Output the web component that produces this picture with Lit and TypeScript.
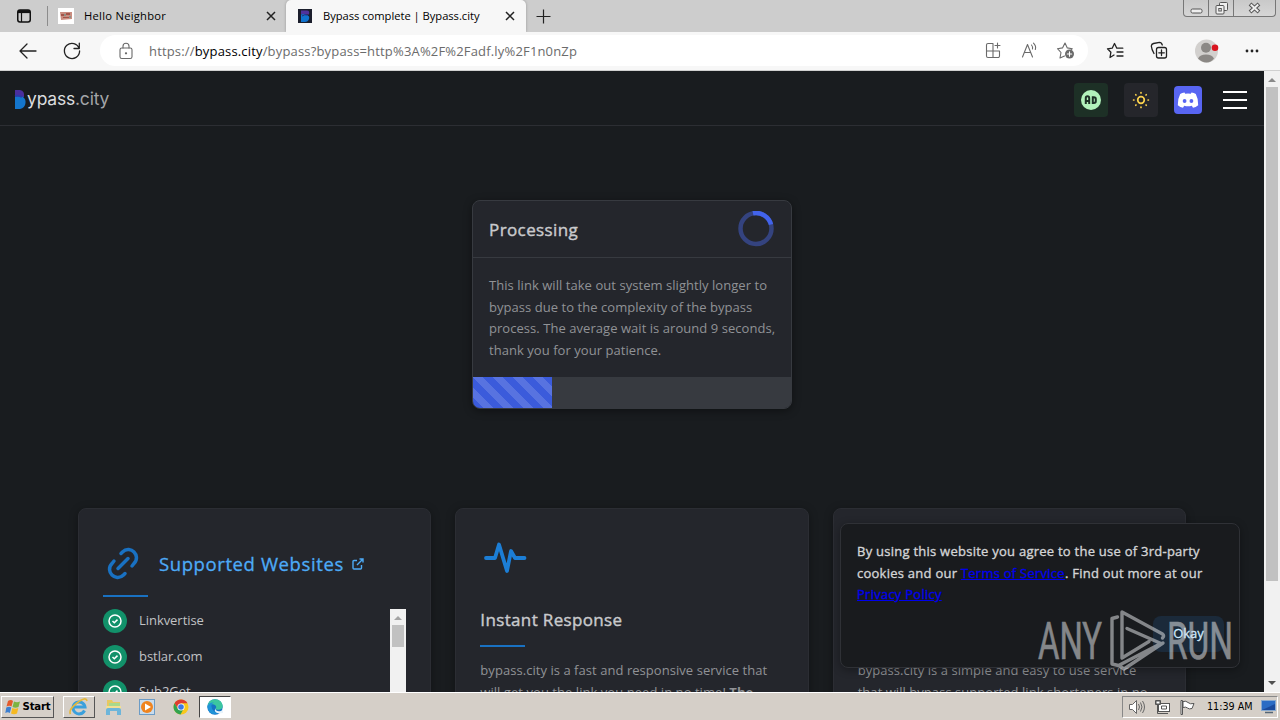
import { LitElement, html, css, svg } from "lit";
import { customElement, property } from "lit/decorators.js";

const uiFont = css`"Open Sans", "Noto Sans", sans-serif`;

@customElement("browser-tabs")
export class BrowserTabs extends LitElement {
  static styles = css`
    :host {
      display: flex;
      height: 32px;
      background: #cdcdcd;
      font: 11.2px/32px ${uiFont};
      color: #000;
    }

    svg {
      display: block;
      flex: none;
    }

    .workspace {
      width: 47px;
      display: flex;
      align-items: center;
      padding-left: 16px;
      box-sizing: border-box;
    }

    .tab {
      display: flex;
      align-items: center;
      box-sizing: border-box;
      height: 32px;
    }

    .idle {
      width: 239px;
      padding: 0 10px 0 10px;
      border-left: 1px solid #8c8c8c;
      border-image: linear-gradient(transparent 20%, #8c8c8c 20% 80%, transparent 80%) 1;
      border-width: 0 0 0 1px;
    }

    .active {
      width: 240px;
      padding: 0 11px 0 12px;
      background: #f7f7f7;
      border-radius: 5px 5px 0 0;
      box-shadow: 0 0 3px #0004;
      clip-path: inset(0 -3px 0 -3px);
    }

    .label {
      flex: 1;
      padding-left: 10px;
      letter-spacing: 0.27px;
      white-space: nowrap;
    }

    .active .label {
      padding-left: 11px;
      letter-spacing: -0.03px;
    }

    .plus {
      align-self: center;
      margin-left: 10px;
    }

    .window {
      display: flex;
      margin-left: auto;
      margin-right: 4px;
      width: 93px;
      height: 17px;
      box-sizing: border-box;
      border: 1px solid #777;
      border-top: 0;
      border-radius: 0 0 4px 4px;
      background: linear-gradient(#c9c9c9, #d6d6d6);
    }

    .window span {
      display: grid;
      place-items: center;
      width: 25px;
      box-sizing: border-box;
      border-right: 1px solid #777;
    }

    .window span:last-child {
      flex: 1;
      border: 0;
    }
  `;

  _close() {
    return svg`<svg width="10" height="10"><path d="M1 1l8 8M9 1l-8 8" stroke="#222" stroke-width="1.5"/></svg>`;
  }

  render() {
    return html`
      <div class="workspace">
        <svg width="16" height="16" fill="none" stroke="#111" stroke-width="1.5">
          <rect x="1.75" y="2" width="12.5" height="12" rx="2.2" />
          <path d="M2 3.6h12" stroke-width="3" />
          <path d="M5.5 4v10" stroke-width="1.2" />
        </svg>
      </div>
      <div class="tab idle">
        <svg width="16" height="16">
          <rect width="16" height="16" fill="#fff" />
          <path d="M2 4h12v7l-11 1z" fill="#c98d80" />
          <path d="M3 6h3v2H3zM8 5h4v2H8zM5 9h6v1H5z" fill="#a35449" />
          <path d="M6 6h2v2H6zM11 8h2v2h-2z" fill="#8b9187" />
        </svg>
        <span class="label">Hello Neighbor</span>
        ${this._close()}
      </div>
      <div class="tab active">
        <svg width="14" height="14">
          <rect width="14" height="14" fill="#1b1e2c" />
          <path d="M3 1.5h6q3 0 2 4H3z" fill="#50329d" />
          <path d="M3 5.5q3-1 6 .5 3 1 2 4-1 3-4 3H3z" fill="#1173cf" />
          <path d="M4 7q3-2 5-1" stroke="#2b2878" fill="none" />
        </svg>
        <span class="label">Bypass complete | Bypass.city</span>
        ${this._close()}
      </div>
      <svg class="plus" width="15" height="15">
        <path d="M7.5.5v14M.5 7.5h14" stroke="#222" stroke-width="1.2" />
      </svg>
      <div class="window">
        <span>
          <svg width="13" height="13"><rect x="1" y="7" width="11" height="4" rx="1.5" fill="#eee" stroke="#555" /></svg>
        </span>
        <span>
          <svg width="13" height="13" fill="#eee" stroke="#555">
            <rect x="4.5" y=".5" width="8" height="8" rx="1" />
            <rect x="1" y="3.5" width="8" height="8.5" rx="1" />
            <rect x="3.8" y="6.5" width="2.5" height="2.5" />
          </svg>
        </span>
        <span>
          <svg width="13" height="12">
            <path d="M2 2l9 8M11 2l-9 8" stroke="#555" stroke-width="4" />
            <path d="M2.7 2.6l7.6 6.8M10.3 2.6l-7.6 6.8" stroke="#eee" stroke-width="2" />
          </svg>
        </span>
      </div>
    `;
  }
}

@customElement("browser-toolbar")
export class BrowserToolbar extends LitElement {
  static styles = css`
    :host {
      display: flex;
      align-items: center;
      box-sizing: border-box;
      height: 39px;
      padding: 0 20px 1px 18px;
      background: #f7f7f7;
      border-bottom: 1px solid #d0d0d0;
      font: 13px/32px ${uiFont};
    }

    svg {
      display: block;
      flex: none;
      fill: none;
      stroke: #222;
      stroke-width: 1.3;
      stroke-linecap: round;
      stroke-linejoin: round;
    }

    .reload {
      margin-left: 24px;
    }

    .address {
      display: flex;
      align-items: center;
      box-sizing: border-box;
      width: 988px;
      height: 31px;
      margin-left: 18px;
      padding: 0 13px 0 16px;
      border-radius: 16px;
      background: #fff;
    }

    .address svg {
      stroke: #6a6a6a;
      stroke-width: 1.1;
    }

    .url {
      flex: 1;
      padding-left: 13px;
      color: #6b6b6b;
      letter-spacing: 0.17px;
      white-space: nowrap;
    }

    .url b {
      font-weight: 400;
      color: #000;
    }

    .tools {
      display: flex;
      gap: 17px;
    }

    .actions {
      display: flex;
      align-items: center;
      flex: 1;
      justify-content: space-between;
      padding-left: 18px;
    }
  `;

  render() {
    return html`
      <svg width="20" height="18"><path d="M18 9H2.5M9 2L2 9l7 7" /></svg>
      <svg class="reload" width="20" height="20">
        <path d="M17.2 7.5A7.6 7.6 0 1 0 17.6 10M17.3 2.2v5.3H12" />
      </svg>
      <div class="address">
        <svg width="20" height="20">
          <rect x="4" y="7" width="12" height="10.5" rx="1.8" />
          <path d="M7 7V5.2a3 3 0 0 1 6 0V7" />
          <circle cx="10" cy="12.3" r=".6" fill="#666" />
        </svg>
        <span class="url">https://<b>bypass.city</b>/bypass?bypass=http%3A%2F%2Fadf.ly%2F1n0nZp</span>
        <div class="tools">
          <svg width="19" height="19">
            <path
              d="M9 2.5H4A1.5 1.5 0 0 0 2.5 4v11A1.5 1.5 0 0 0 4 16.5h10a1.5 1.5 0 0 0 1.5-1.5v-5h-13M9 2.5v14M13.500 2v5M11 4.500h5"
            />
          </svg>
          <svg width="19" height="19">
            <path d="M2.500 16L7.500 3.500 12.500 16M4.200 11.500h6.600M11.500 4q1.500 1.700 1 4M13.500 2.200q3 3 1.800 6.300" />
          </svg>
          <svg width="19" height="19">
            <path d="M8.500 15L4 17l1-5.500L1.500 7.700l5-.8L9 2l2.300 4.900 5 .8-1.600 1.700" />
            <circle cx="13.500" cy="13" r="4.500" fill="#6a6a6a" stroke="none" />
            <path d="M13.500 10.800v4.400M11.300 13h4.400" stroke="#fff" />
          </svg>
        </div>
      </div>
      <div class="actions">
        <svg width="20" height="18">
          <path d="M8 13l-4 2.500.9-5.300L1.500 6.800l4.700-.6L8.500 1.500l2.300 4.700h6M11 10h6M11 14h6" />
        </svg>
        <svg width="20" height="19">
          <rect x="6.500" y="6.500" width="10" height="10.500" rx="2" />
          <path d="M11.500 9v5.500M8.800 11.800h5.500M4 12.500Q1.500 8 1.300 5q.2-2 2.200-2.500l6-1.200q2 0 2.800 2.700" />
        </svg>
        <svg width="25" height="24">
          <g stroke="none">
            <circle cx="11.500" cy="12" r="11.500" fill="#d2d0ce" />
            <circle cx="11" cy="8.800" r="5" fill="#8b8885" />
            <path d="M3 19.500a8.500 6 0 0 1 16 0q-3 4-7.500 4t-8.500-4z" fill="#8b8885" />
            <circle cx="20" cy="8.800" r="3.300" fill="#d9141e" />
          </g>
        </svg>
        <svg width="16" height="6">
          <g fill="#222" stroke="none">
            <circle cx="3" cy="3" r="1.400" />
            <circle cx="8" cy="3" r="1.400" />
            <circle cx="13" cy="3" r="1.400" />
          </g>
        </svg>
      </div>
    `;
  }
}

@customElement("site-header")
export class SiteHeader extends LitElement {
  static styles = css`
    :host {
      display: flex;
      align-items: center;
      box-sizing: border-box;
      height: 55px;
      padding: 0 17px 0 14px;
      border-bottom: 1px solid #2c2e33;
      color: #dcdddf;
      font: 17.5px/54px Inter, sans-serif;
    }

    svg {
      display: block;
    }

    .logo {
      margin-top: 3px;
    }

    .name {
      letter-spacing: -0.2px;
      margin: 1px auto 0 1px;
    }

    .name span {
      color: #a3a5a8;
    }

    .button {
      display: grid;
      place-items: center;
      width: 34px;
      height: 34px;
      margin-top: 4px;
      margin-right: 16px;
      border-radius: 4px;
      background: #25262b;
    }

    .ad {
      background: #1d3026;
    }

    .discord {
      width: 28px;
      height: 28px;
      margin-right: 21px;
      background: #5865f2;
    }

    .menu {
      margin-top: 4px;
    }
  `;

  render() {
    const rays = [0, 45, 90, 135, 180, 225, 270, 315];
    return html`
      <svg class="logo" width="12" height="19">
        <path d="M1 0h5q5 1 4 7l-9 2z" fill="#4a2f9e" />
        <path d="M1 6q5-1.500 8 1 3 2 2.500 6-.5 5-5.500 6H1z" fill="#1475cc" />
        <path d="M1 6q4-1 7 1" stroke="#2c3aa8" stroke-width="2" fill="none" />
      </svg>
      <div class="name">ypass<span>.city</span></div>
      <div class="button ad">
        <svg width="20" height="20">
          <circle cx="10" cy="10" r="10" fill="#b2f2bb" />
          <g fill="none" stroke="#1d3026" stroke-width="2">
            <path
              d="M4.800 14V8q0-1.700 1.700-1.700T8.200 8v6M4.800 11h3.400M11.800 7.200v5.800h1q2 0 2-1.700V8.900q0-1.700-2-1.700z"
            />
          </g>
        </svg>
      </div>
      <div class="button">
        <svg width="18" height="18" fill="none" stroke="#fcd34d" stroke-width="1.700" stroke-linecap="round">
          <circle cx="9" cy="9" r="3.300" />
          ${rays.map((a) => svg`<path d="M9 1.600v.3" transform="rotate(${a} 9 9)"/>`)}
        </svg>
      </div>
      <div class="button discord">
        <svg width="22" height="18" viewBox="0 0 22 18">
          <path
            d="M7.500 1.500Q5 1.800 3.200 3 .5 8 .8 14.200q2.500 2 5.200 2.600l1.200-2q3.800 1 7.600 0l1.200 2q2.700-.6 5.200-2.600Q21.500 8 18.800 3 17 1.800 14.500 1.500l-.7 1.300q-2.800-.4-5.600 0z"
            fill="#fff"
          />
          <ellipse cx="7.600" cy="10" rx="1.900" ry="2.100" fill="#5865f2" />
          <ellipse cx="14.400" cy="10" rx="1.900" ry="2.100" fill="#5865f2" />
        </svg>
      </div>
      <svg class="menu" width="24" height="18">
        <path d="M0 1h24M0 9h24M0 17h24" stroke="#fff" stroke-width="2" />
      </svg>
    `;
  }
}

@customElement("process-card")
export class ProcessCard extends LitElement {
  static styles = css`
    :host {
      display: block;
      box-sizing: border-box;
      width: 320px;
      height: 209px;
      border: 1px solid #373a40;
      border-radius: 8px;
      overflow: hidden;
      background: #24262c;
      box-shadow: 0 2px 8px #0006;
      color: #909296;
      font: 13px/21.7px ${uiFont};
    }

    header {
      display: flex;
      align-items: center;
      justify-content: space-between;
      box-sizing: border-box;
      height: 57px;
      padding: 0 17px 0 16px;
      border-bottom: 1px solid #373a40;
      color: #c9cacd;
      font-size: 17px;
      letter-spacing: 0.4px;
      -webkit-text-stroke: 0.4px #c9cacd;
    }

    header span {
      padding-top: 2px;
    }

    p {
      box-sizing: border-box;
      margin: 0;
      padding: 17px 0 0 16px;
      height: 119px;
      letter-spacing: 0.05px;
      white-space: nowrap;
    }

    .bar {
      height: 31px;
      background: #373a40;
    }

    .value {
      height: 100%;
      background: linear-gradient(
          45deg,
          #ffffff26 25%,
          transparent 25% 50%,
          #ffffff26 50% 75%,
          transparent 75%
        )
        0 0 / 20px 20px #3b5bdb;
    }
  `;

  @property({ type: Number }) progress = 0;

  render() {
    return html`
      <header>
        <span>Processing</span>
        <svg width="36" height="36" fill="none" stroke-width="4.500">
          <circle cx="18" cy="17.500" r="15.500" stroke="#34437f" />
          <path d="M15 2.300A15.500 15.500 0 0 1 33 13.500" stroke="#4263eb" />
        </svg>
      </header>
      <p>
        This link will take out system slightly longer to<br />bypass due to the complexity of the bypass<br />process.
        The average wait is around 9 seconds,<br />thank you for your patience.
      </p>
      <div class="bar"><div class="value" style="width: ${this.progress}%"></div></div>
    `;
  }
}

@customElement("feature-grid")
export class FeatureGrid extends LitElement {
  static styles = css`
    :host {
      display: grid;
      grid-template-columns: repeat(3, 1fr);
      gap: 24px;
      width: 1108px;
      color: #909296;
      font: 13px/21.7px ${uiFont};
    }

    svg {
      display: block;
      flex: none;
    }

    .card {
      box-sizing: border-box;
      height: 300px;
      padding: 24px;
      border: 1px solid #2b2d33;
      border-radius: 8px;
      background: #24262c;
      box-shadow: 0 2px 10px #0005;
    }

    .head {
      display: flex;
      align-items: center;
      box-sizing: border-box;
      height: 62px;
      padding-bottom: 2px;
      padding-top: 1px;
      color: #4dabf7;
      font-size: 18.5px;
    }

    .head span {
      margin: 0 8px 0 16px;
      letter-spacing: 0.6px;
      -webkit-text-stroke: 0.3px #4dabf7;
    }

    .line {
      width: 45px;
      height: 2px;
      background: #1971c2;
    }

    .scroll {
      display: flex;
      justify-content: space-between;
      height: 160px;
      margin-top: 12px;
      color: #c1c2c5;
      overflow: hidden;
    }

    ul {
      margin: 0;
      padding: 0;
      list-style: none;
    }

    li {
      display: flex;
      align-items: center;
      gap: 12px;
      height: 24px;
      margin-bottom: 11.5px;
      line-height: 22px;
      font-size: 13px;
    }

    li span {
      padding-bottom: 2px;
      letter-spacing: -0.05px;
    }

    .track {
      width: 16px;
      background: #f1f1f1;
    }

    .thumb {
      width: 12px;
      height: 22px;
      margin: 0 2px;
      background: #c1c1c1;
    }

    h3 {
      margin: 24px 0 12px;
      color: #c9cacd;
      font-size: 17px;
      font-weight: 400;
      line-height: 26px;
      letter-spacing: 0.35px;
      -webkit-text-stroke: 0.4px #c9cacd;
    }

    .body {
      margin: 0;
      padding-top: 13px;
      letter-spacing: 0.05px;
      white-space: nowrap;
    }

    .covered {
      height: 114px;
    }
  `;

  _sites = ["Linkvertise", "bstlar.com", "Sub2Get"];

  render() {
    return html`
      <div class="card">
        <div class="head">
          <svg width="40" height="40" fill="none" stroke="#1971c2" stroke-width="3.500" stroke-linecap="round">
            <path d="M15 24.500L25 14.500" />
            <path d="M18 9.500l1.500-1.500c4-4 9-2.500 11.500 0s4 7.500 0 11.500L29 22" />
            <path d="M22 29.500l-1.500 1.500c-4 4-9 2.500-11.500 0s-4-7.500 0-11.500L11 17" />
          </svg>
          <span>Supported Websites</span>
          <svg width="12" height="12" fill="none" stroke="#4dabf7" stroke-width="1.400">
            <path d="M5 2.500H2q-1 0-1 1V10q0 1 1 1h6.500q1 0 1-1V7M7.500 1H11v3.500M11 1L5 7" />
          </svg>
        </div>
        <div class="line"></div>
        <div class="scroll">
          <ul>
            ${this._sites.map(
              (name) => html`
                <li>
                  <svg width="24" height="24" fill="none" stroke="#fff" stroke-width="1.500">
                    <circle cx="12" cy="12" r="12" fill="#12916a" stroke="none" />
                    <circle cx="12" cy="12" r="6" />
                    <path d="M9.500 12l1.800 1.800 3.200-3.200" />
                  </svg>
                  <span>${name}</span>
                </li>
              `
            )}
          </ul>
          <div class="track">
            <svg width="16" height="16"><path d="M4 11l4-4 4 4z" fill="#a3a3a3" /></svg>
            <div class="thumb"></div>
          </div>
        </div>
      </div>
      <div class="card">
        <svg
          width="50"
          height="50"
          fill="none"
          stroke="#1c7ed6"
          stroke-width="3.800"
          stroke-linecap="round"
          stroke-linejoin="round"
        >
          <path d="M6 25h9l4-13.500 8 26.500 4-20 4 7h9.500" />
        </svg>
        <h3>Instant Response</h3>
        <div class="line"></div>
        <p class="body">
          bypass.city is a fast and responsive service that<br />will get you the link you need in no time! <b>The</b>
        </p>
      </div>
      <div class="card">
        <div class="covered"></div>
        <p class="body">
          bypass.city is a simple and easy to use service<br />that will bypass supported link shorteners in no
        </p>
      </div>
    `;
  }
}

@customElement("cookie-notice")
export class CookieNotice extends LitElement {
  static styles = css`
    :host {
      display: flex;
      flex-direction: column;
      justify-content: space-between;
      box-sizing: border-box;
      width: 400px;
      height: 145px;
      padding: 17px 15px 15px 16px;
      border: 1px solid #2f3136;
      border-radius: 8px;
      background: #191b1e;
      color: #d3d4d6;
      font: 13px/21.7px ${uiFont};
      box-shadow: 0 2px 8px #0005;
    }

    p {
      margin: 0;
      letter-spacing: 0.25px;
      white-space: nowrap;
      -webkit-text-stroke: 0.35px currentColor;
    }

    a {
      color: #0000ee;
      text-decoration: underline;
    }

    button {
      align-self: flex-end;
      width: 71px;
      height: 36px;
      padding: 0 0 2px;
      border: 0;
      border-radius: 8px;
      background: #1b2a3a;
      color: #d0ebff;
      font: 13px/34px ${uiFont};
      -webkit-text-stroke: 0.3px currentColor;
    }
  `;

  render() {
    return html`
      <p>
        By using this website you agree to the use of 3rd-party<br />cookies and our <a>Terms of Service</a>. Find out
        more at our<br /><a>Privacy Policy</a>
      </p>
      <button>Okay</button>
    `;
  }
}

@customElement("task-bar")
export class TaskBar extends LitElement {
  static styles = css`
    :host {
      display: flex;
      align-items: center;
      box-sizing: border-box;
      height: 28px;
      padding: 1px 2px 0 1px;
      border-top: 1px solid #fff;
      background: #d5cfc8;
      color: #000;
      font: 10.7px/20px "DejaVu Sans Condensed", "DejaVu Sans", sans-serif;
    }

    svg {
      display: block;
    }

    .start,
    .item {
      display: flex;
      align-items: center;
      justify-content: center;
      box-sizing: border-box;
      height: 22px;
      border: 1px solid transparent;
    }

    .start {
      width: 53px;
      gap: 2px;
      margin-right: 9px;
      font-weight: bold;
      font-size: 11.3px;
      letter-spacing: -0.2px;
    }

    .item {
      width: 32px;
      margin-right: 2px;
    }

    .start,
    .raised {
      border-color: #fff #555 #555 #fff;
    }

    .pressed {
      border-color: #444 #fff #fff #444;
      background: #fff;
    }

    .tray {
      display: flex;
      align-items: center;
      box-sizing: border-box;
      width: 156px;
      height: 22px;
      margin-left: auto;
      padding-left: 5px;
      gap: 8px;
      border: 1px solid;
      border-color: #888 #fff #fff #888;
    }

    .time {
      width: 46px;
      white-space: nowrap;
      margin-left: 3px;
    }
  `;

  render() {
    return html`
      <div class="start">
        <svg width="16" height="16">
          <path d="M3 2q3-2 5 0L6.500 7.500q-2-1.500-5 0z" fill="#e45a2b" />
          <path d="M9 2.500q3 1.500 6 0L13.500 8q-3 1.500-6 0z" fill="#7cb342" />
          <path d="M1.300 8.500q3-1.500 5 0L4.800 14q-2-1.500-4.500 0z" fill="#3c7fd0" />
          <path d="M7.300 9q3 1.500 6 0L12 14.500q-3 1.500-6 0z" fill="#f5b921" />
        </svg>
        Start
      </div>
      <div class="item raised">
        <svg width="20" height="18" fill="none">
          <path d="M15.500 12.500A6 6 0 1 1 16 9H5" stroke="#3aa0dc" stroke-width="3" />
          <path d="M1.500 16Q-1 12 8 5t10-2" stroke="#e5b83a" stroke-width="1.600" />
        </svg>
      </div>
      <div class="item">
        <svg width="17" height="17">
          <path d="M2 1h5l1 2h7v8H2z" fill="#e8c860" />
          <path d="M4 4h11v4H4z" fill="#a8d98c" />
          <path d="M1 7h15v3H1z" fill="#f3df93" />
          <path d="M1 16v-5q0-2 2-2h11q2 0 2 2v5h-4v-4H5v4z" fill="#6db5da" />
        </svg>
      </div>
      <div class="item">
        <svg width="17" height="17">
          <rect x=".5" y=".5" width="15" height="15" fill="#c9dced" stroke="#6c9cc6" />
          <circle cx="8" cy="8" r="6" fill="#ef8420" />
          <path d="M6 4.500l6 3.500-6 3.500z" fill="#fff" />
        </svg>
      </div>
      <div class="item">
        <svg width="16" height="16">
          <circle cx="8" cy="8" r="7.500" fill="#f8c81c" />
          <path d="M1.500 4.300A7.500 7.500 0 0 1 14.500 4.300H8L5 10z" fill="#df3d31" />
          <path d="M1.500 4.300A7.500 7.500 0 0 0 7.500 15.500L10.500 10H5z" fill="#31a350" />
          <circle cx="8" cy="8" r="3.600" fill="#fff" />
          <circle cx="8" cy="8" r="2.800" fill="#3c79e6" />
        </svg>
      </div>
      <div class="item pressed">
        <svg width="16" height="16">
          <circle cx="8" cy="8" r="7.700" fill="#1673c4" />
          <path
            d="M.4 7.500Q1.500.4 8 .3t7.700 6.500q0 4-4.500 4-2.500 0-2.700-1.300Q10 8.500 8.800 6.800 5 3.500.4 7.500z"
            fill="#3cc7a0"
          />
          <path d="M.4 7.500Q2 3 7 3.500q-3 1-2.500 4Q5 13 12 14 2 18 .4 7.500z" fill="#1f93d8" />
          <path d="M8.500 9.500q0 3.500 5.500 2.500l2-1v3l-4 .5Q6 13 8.500 9.500z" fill="#e9f4fb" />
        </svg>
      </div>
      <div class="tray">
        <svg width="18" height="16" fill="none" stroke="#666">
          <path d="M1.500 5.500h3l4-4v13l-4-4h-3z" fill="#fff" />
          <path d="M10.500 5q2 3 0 6M12.500 3.500q3 4.500 0 9M14.500 2q4 6 0 12" />
        </svg>
        <svg width="17" height="16" fill="#fff" stroke="#555">
          <rect x="4.500" y="4.500" width="11" height="8" />
          <path d="M7 14.500h7M1.500 1.500h5v4h-5zM3.500 5.500v9h4" fill="none" />
          <path d="M2 2h4v3H2zM7.500 7h5v3h-5z" />
        </svg>
        <svg width="17" height="16" fill="#fff" stroke="#555">
          <path d="M2 1.500h1.500v14H2zM4 2.500q3-1 5 1t6 1l-2 5q-3 1-4.500-.5T4 8.500z" />
        </svg>
        <span class="time">11:39 AM</span>
        <svg width="16" height="14">
          <rect x=".5" y=".5" width="14" height="10" fill="#2b6cc4" stroke="#88a9cf" />
          <path d="M1 10L14 4v6z" fill="#1b4a9b" />
          <path d="M4 12.500h8" stroke="#567" stroke-width="1.500" />
        </svg>
      </div>
    `;
  }
}

@customElement("app-root")
export class AppRoot extends LitElement {
  static styles = css`
    :host {
      display: flex;
      flex-direction: column;
      position: relative;
      width: 1280px;
      height: 720px;
      overflow: hidden;
    }

    .view {
      display: flex;
      flex: 1;
      min-height: 0;
      background: #191c1f;
    }

    .page {
      width: 1264px;
      overflow: hidden;
    }

    process-card {
      margin: 74px auto 99px;
    }

    feature-grid {
      margin: 0 auto;
    }

    .scrollbar {
      display: flex;
      flex-direction: column;
      align-items: center;
      width: 16px;
      background: #f1f1f1;
    }

    .scrollbar svg {
      display: block;
      flex: none;
    }

    .thumb {
      width: 12px;
      height: 494px;
      margin-bottom: auto;
      background: #c1c1c1;
    }

    cookie-notice {
      position: absolute;
      left: 840px;
      top: 523px;
    }

    .watermark {
      position: absolute;
      left: 1036px;
      top: 606px;
      opacity: 0.56;
      font: 400 52px Roboto, sans-serif;
    }
  `;

  render() {
    return html`
      <browser-tabs></browser-tabs>
      <browser-toolbar></browser-toolbar>
      <div class="view">
        <div class="page">
          <site-header></site-header>
          <process-card .progress=${24.8}></process-card>
          <feature-grid></feature-grid>
        </div>
        <div class="scrollbar">
          <svg width="16" height="16"><path d="M4 11l4-4 4 4z" fill="#8a8a8a" /></svg>
          <div class="thumb"></div>
          <svg width="16" height="17"><path d="M4 6l4 4 4-4z" fill="#505050" /></svg>
        </div>
      </div>
      <task-bar></task-bar>
      <cookie-notice></cookie-notice>
      <svg class="watermark" width="200" height="70" fill="#d8dadd" stroke="#d8dadd" stroke-width=".6">
        <text x="2" y="53" textLength="64" lengthAdjust="spacingAndGlyphs">ANY</text>
        <text x="131" y="53" textLength="66" lengthAdjust="spacingAndGlyphs">RUN</text>
        <g fill="none" stroke-width="3.400" stroke-linejoin="round" stroke-linecap="round">
          <path
            d="M81.500 11l-5.500 1.500V58l6.500 1.500L125 37.500L91 22.500M113 35.500L86 52V6l40.500 22q2 2 0 4M83 59.500l5 3.500 39-26"
          />
        </g>
      </svg>
    `;
  }
}
